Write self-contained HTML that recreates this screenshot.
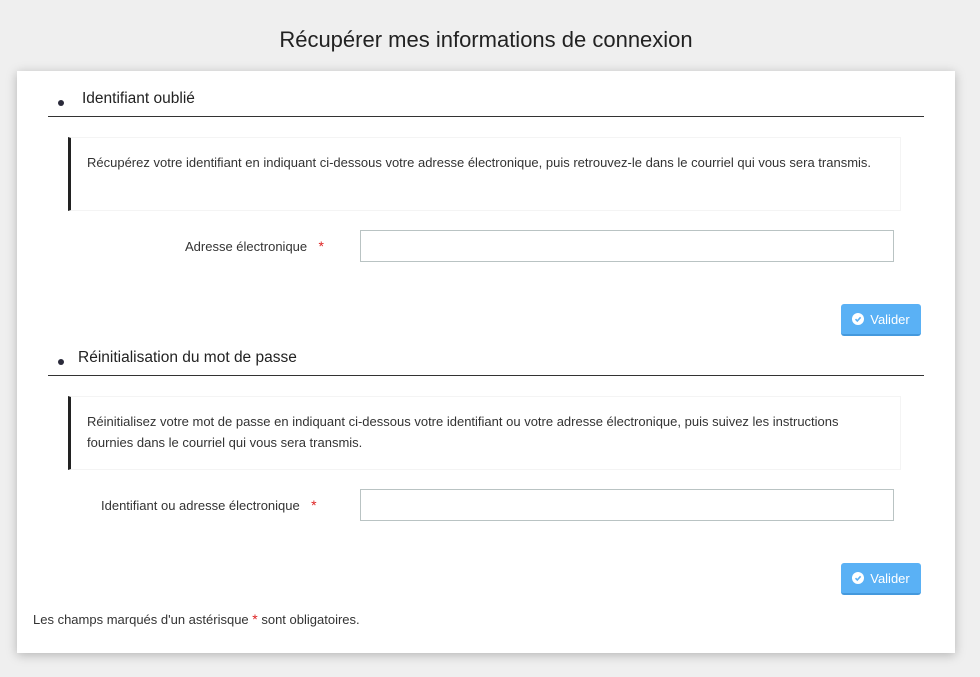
<!DOCTYPE html>
<html><head><meta charset="utf-8"><style>
*{margin:0;padding:0;box-sizing:border-box}
body{width:980px;height:677px;background:#efefef;font-family:"Liberation Sans",sans-serif;color:#333;position:relative;overflow:hidden}
.a{position:absolute;white-space:nowrap}
h1{position:absolute;top:27px;left:0;width:972px;text-align:center;font-weight:normal;font-size:22px;color:#222}
.panel{position:absolute;left:17px;top:71px;width:938px;height:582px;background:#fff;box-shadow:0 2px 10px rgba(0,0,0,.25)}
.h{font-size:15.5px;color:#222}
.dot{width:6px;height:6px;border-radius:50%;background:#2a2a3a}
.line{height:1px;background:#333;left:31px;width:876px}
.note{left:51px;width:833px;height:74px;border:1px solid #f4f4f4;border-left:3px solid #222;font-size:13px;line-height:21px;padding:14px 16px;color:#333;white-space:normal}
.lbl{font-size:13px;color:#333}
.st{color:#d22;font-size:14px}
.inp{width:534px;height:32px;border:1px solid #b9c3c3;background:#fff}
.btn{width:80px;height:32px;background:#5ab1f5;border-radius:3px;border-bottom:2px solid #4499dd;color:#fff;font-size:13px;display:flex;align-items:center;justify-content:center;gap:6px}
.ic{width:12px;height:12px;border-radius:50%;background:#fff;display:inline-flex;align-items:center;justify-content:center}
</style></head><body>
<h1>Récupérer mes informations de connexion</h1>
<div class="panel">
<div class="a dot" style="left:41px;top:29px"></div>
<div class="a h" style="left:65px;top:19px">Identifiant oublié</div>
<div class="a line" style="top:45px"></div>
<div class="a note" style="top:66px">Récupérez votre identifiant en indiquant ci-dessous votre adresse électronique, puis retrouvez-le dans le courriel qui vous sera transmis.</div>
<div class="a lbl" style="left:168px;top:167px">Adresse électronique <span class="st">&nbsp;&nbsp;*</span></div>
<div class="a inp" style="left:343px;top:159px"></div>
<div class="a btn" style="left:824px;top:233px"><span class="ic"><svg width="8" height="8" viewBox="0 0 8 8"><path d="M1.5 4.2L3.3 6 6.6 2.3" stroke="#5ab1f5" stroke-width="1.6" fill="none"/></svg></span>Valider</div>
<div class="a dot" style="left:41px;top:288px"></div>
<div class="a h" style="left:61px;top:278px">Réinitialisation du mot de passe</div>
<div class="a line" style="top:304px"></div>
<div class="a note" style="top:325px">Réinitialisez votre mot de passe en indiquant ci-dessous votre identifiant ou votre adresse électronique, puis suivez les instructions fournies dans le courriel qui vous sera transmis.</div>
<div class="a lbl" style="left:84px;top:426px">Identifiant ou adresse électronique <span class="st">&nbsp;&nbsp;*</span></div>
<div class="a inp" style="left:343px;top:418px"></div>
<div class="a btn" style="left:824px;top:492px"><span class="ic"><svg width="8" height="8" viewBox="0 0 8 8"><path d="M1.5 4.2L3.3 6 6.6 2.3" stroke="#5ab1f5" stroke-width="1.6" fill="none"/></svg></span>Valider</div>
<div class="a lbl" style="left:16px;top:540px">Les champs marqués d'un astérisque <span class="st">*</span> sont obligatoires.</div>
</div>
</body></html>
